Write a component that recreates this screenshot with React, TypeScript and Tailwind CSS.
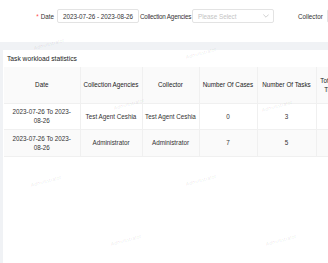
import React from 'react';

interface Row {
  date: string;
  agency: string;
  collector: string;
  cases: number;
  tasks: number;
}

const rows: Row[] = [
  { date: '2023-07-26 To 2023-08-26', agency: 'Test Agent Ceshia', collector: 'Test Agent Ceshia', cases: 0, tasks: 3 },
  { date: '2023-07-26 To 2023-08-26', agency: 'Administrator', collector: 'Administrator', cases: 7, tasks: 5 },
];

// marcas de agua: [left, top]
const watermarks: [number, number][] = [
  [34, 46],
  [186, 55],
  [114, 106],
  [262, 108],
  [31, 183],
  [186, 182],
  [111, 242],
  [266, 242],
];

function ChevronDown() {
  return (
    <svg width="6" height="4" viewBox="0 0 10 6" fill="none" className="shrink-0">
      <path d="M1 1l4 4 4-4" stroke="#bfbfbf" strokeWidth="1.2" strokeLinecap="round" strokeLinejoin="round" />
    </svg>
  );
}

export default function App() {
  return (
    <div
      className="relative w-[328px] h-[263px] overflow-hidden bg-[#f0f2f5] text-[#333] text-[6.3px] leading-[9px]"
      style={{ fontFamily: '"Liberation Sans", Arial, sans-serif' }}
    >
      {/* Filtros */}
      <div className="bg-white h-[42px] pt-[9px] flex items-start whitespace-nowrap">
        <div className="w-[54px] h-[14px] flex items-center justify-end shrink-0">
          <span className="text-[#ff4d4f] mr-[2px]">*</span>
          <span>Date</span>
        </div>
        <div className="ml-[3px] w-[82px] h-[14px] border border-[#e3e3e3] rounded-[2px] flex items-center pl-[5px] shrink-0">
          2023-07-26 - 2023-08-26
        </div>
        <div className="ml-[1px] w-[52px] h-[14px] flex items-center shrink-0 tracking-[-0.2px]">
          Collection Agencies
        </div>
        <div className="w-[82px] h-[14px] border border-[#e3e3e3] rounded-[2px] flex items-center justify-between pl-[5px] pr-[4px] shrink-0">
          <span className="text-[#c4c4c4]">Please Select</span>
          <ChevronDown />
        </div>
        <div className="ml-[24px] h-[14px] flex items-center shrink-0">Collector</div>
        <div className="ml-[4px] w-[80px] h-[14px] border border-[#e3e3e3] rounded-[2px] shrink-0" />
      </div>

      {/* Estadísticas */}
      <div className="mt-[8px] ml-[3px] bg-white h-[220px] overflow-hidden">
        <div className="h-[17px] flex items-center pl-[4px] text-[6.7px] font-medium text-[#222]">
          Task workload statistics
        </div>
        <div className="pl-[1px]">
          <table className="table-fixed border-collapse w-[360px] text-center">
            <colgroup>
              <col className="w-[76px]" />
              <col className="w-[62px]" />
              <col className="w-[57px]" />
              <col className="w-[58px]" />
              <col className="w-[59px]" />
              <col className="w-[48px]" />
            </colgroup>
            <thead>
              <tr className="h-[36px] bg-[#fafafa] text-[#222]">
                <th className="font-medium border-r border-b border-[#f0f0f0] px-[5px]">Date</th>
                <th className="font-medium border-r border-b border-[#f0f0f0] px-[2px]">Collection Agencies</th>
                <th className="font-medium border-r border-b border-[#f0f0f0] px-[2px]">Collector</th>
                <th className="font-medium border-r border-b border-[#f0f0f0] px-[2px]">Number Of Cases</th>
                <th className="font-medium border-r border-b border-[#f0f0f0] px-[2px]">Number Of Tasks</th>
                <th className="font-medium border-b border-[#f0f0f0] px-[1px] whitespace-nowrap">
                  Total Handling
                  <br />
                  Time Taken
                </th>
              </tr>
            </thead>
            <tbody>
              {rows.map((r, i) => (
                <tr key={i} className={i === 1 ? 'h-[27px] bg-[#fafafa]' : 'h-[26px]'}>
                  <td className="border-r border-b border-[#f0f0f0] px-[5px]">{r.date}</td>
                  <td className="border-r border-b border-[#f0f0f0] px-[2px]">{r.agency}</td>
                  <td className="border-r border-b border-[#f0f0f0] px-[2px]">{r.collector}</td>
                  <td className="border-r border-b border-[#f0f0f0] px-[2px]">{r.cases}</td>
                  <td className="border-r border-b border-[#f0f0f0] px-[2px]">{r.tasks}</td>
                  <td className="border-b border-[#f0f0f0] px-[1px]"></td>
                </tr>
              ))}
            </tbody>
          </table>
        </div>
      </div>

      {watermarks.map(([left, top], i) => (
        <span
          key={i}
          className="absolute pointer-events-none text-[5.3px] leading-none text-black/10 -rotate-[15deg] origin-left whitespace-nowrap"
          style={{ left, top }}
        >
          Administrator
        </span>
      ))}
    </div>
  );
}
